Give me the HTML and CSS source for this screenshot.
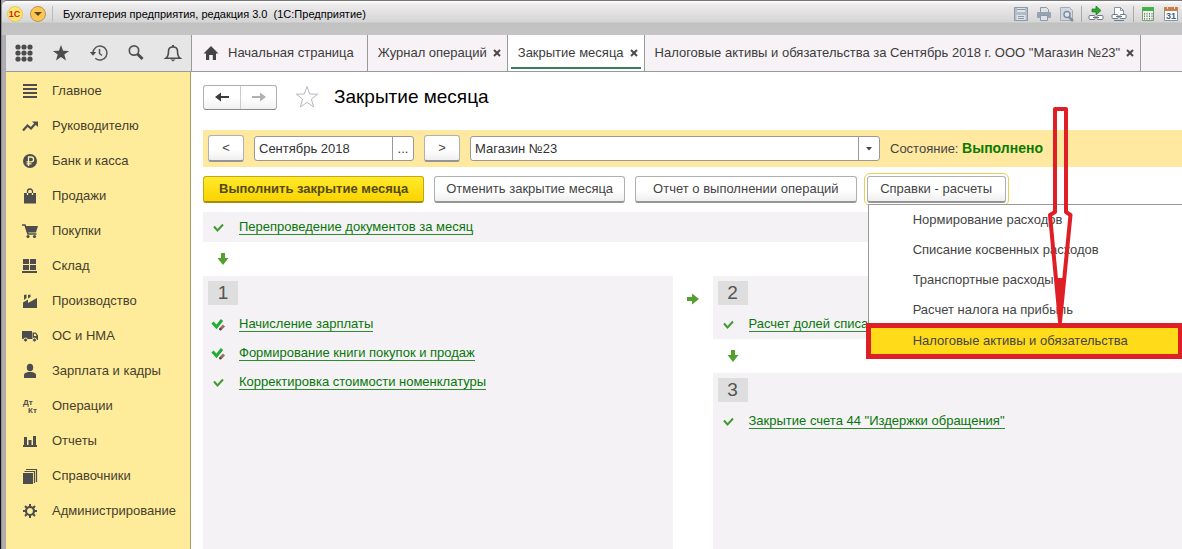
FILE: index.html
```html
<!DOCTYPE html>
<html lang="ru">
<head>
<meta charset="utf-8">
<title>Закрытие месяца</title>
<link rel="stylesheet" href="styles.css">
</head>
<body>
<div class="window">
  <header class="titlebar">
    <svg class="logo" viewBox="0 0 16 16" aria-hidden="true"><circle cx="8" cy="8" r="7.5" fill="#fbe86a" stroke="#e3c95a"/><text x="7.5" y="11" text-anchor="middle" class="logo-text">1С</text></svg>
    <button class="title-menu" aria-label="Главное меню"><svg viewBox="0 0 18 18"><circle cx="9" cy="9" r="7.5" fill="#fcc650" stroke="#b8935a"/><path d="M5 7h8l-4 4z" fill="#5e4526"/></svg></button>
    <span class="title-text">Бухгалтерия предприятия, редакция 3.0 &nbsp;(1С:Предприятие)</span>
    <div class="title-tools">
      <button class="tool" aria-label="Сохранить"><svg viewBox="0 0 16 16"><path d="M1.500 1.500h13v13h-13z" fill="#b4bcc7" stroke="#8c99a8"/><path d="M4 2h8v4H4zM3.500 9h9v5h-9z" fill="#dfe3e8"/><path d="M4 3.500h8M5 10.500h6M5 12.500h6" stroke="#8c99a8"/></svg></button>
      <button class="tool" aria-label="Печать"><svg viewBox="0 0 16 16"><path d="M4.500 6V1.500h6l2 2V6" fill="#dfe3e8" stroke="#8c99a8"/><rect x="1" y="6" width="14" height="6" rx="1" fill="#96a3b2"/><path d="M4.500 9.500h7v5h-7z" fill="#dfe3e8" stroke="#8c99a8"/></svg></button>
      <button class="tool" aria-label="Предварительный просмотр"><svg viewBox="0 0 16 16"><path d="M1.500 1.500h9l3 3v10h-12z" fill="#d3d8de" stroke="#a2acb8"/><circle cx="8" cy="8.500" r="3" fill="#dfe6ee" stroke="#7f8fa2" stroke-width="1.500"/><path d="M10 11l4 4" stroke="#7f8fa2" stroke-width="2.500"/></svg></button>
      <span class="tool-sep"></span>
      <button class="tool" aria-label="Перейти по ссылке"><svg viewBox="0 0 16 16"><path d="M4 3h4V0l5 4.500L8 9V6H4z" fill="#2fa52c" stroke="#187a1c" stroke-width=".7"/><rect x="1" y="9.500" width="6" height="4" rx="1" fill="#fff" stroke="#6c7987"/><rect x="9" y="9.500" width="6" height="4" rx="1" fill="#fff" stroke="#6c7987"/><path d="M5 11.500h6" stroke="#6c7987"/></svg></button>
      <button class="tool" aria-label="Получить ссылку"><svg viewBox="0 0 16 16"><path d="M3.500 10V1.500h6l3 3V10" fill="#fff" stroke="#8a949f"/><path d="M9.500 1.500v3h3" fill="none" stroke="#8a949f"/><rect x="1" y="8.500" width="6" height="4" rx="1" fill="#fff" stroke="#6c7987"/><rect x="9" y="8.500" width="6" height="4" rx="1" fill="#fff" stroke="#6c7987"/><path d="M5 10.500h6M3 14.500h10" stroke="#6c7987"/></svg></button>
      <span class="tool-sep"></span>
      <button class="tool" aria-label="Калькулятор"><svg viewBox="0 0 16 16"><path d="M2.500 1.500h11v13h-11z" fill="#eef3ec" stroke="#7c9b7a"/><path d="M2 1h12v4H2z" fill="#46b04a"/><path d="M4.500 7v7M7 7v7M9.500 7v7M12 7v7" stroke="#5c7b62" stroke-dasharray="1.500 1"/></svg></button>
      <button class="tool" aria-label="Календарь"><svg viewBox="0 0 16 16"><path d="M1.500 1.500h13v13h-13z" fill="#fff" stroke="#8b96a3"/><path d="M1 1h14v4H1z" fill="#c97f4c"/><path d="M4.500 0v3M11.500 0v3" stroke="#f0dcc8"/><text x="8" y="13" text-anchor="middle" class="cal-text">31</text></svg></button>
    </div>
  </header>

  <div class="topbar">
    <div class="quick">
      <button class="qbtn" aria-label="Меню"><svg viewBox="0 0 20 20"><g fill="#4d4d4d"><circle cx="4" cy="4" r="2.600"/><circle cx="10" cy="4" r="2.600"/><circle cx="16" cy="4" r="2.600"/><circle cx="4" cy="10" r="2.600"/><circle cx="10" cy="10" r="2.600"/><circle cx="16" cy="10" r="2.600"/><circle cx="4" cy="16" r="2.600"/><circle cx="10" cy="16" r="2.600"/><circle cx="16" cy="16" r="2.600"/></g></svg></button>
      <button class="qbtn" aria-label="Избранное"><svg viewBox="0 0 20 20"><path d="M10 2l2.100 5.700 6 .2-4.800 3.700 1.700 5.900-5-3.400-5 3.400 1.700-5.900L1.900 7.900l6-.2z" fill="#4d4d4d"/></svg></button>
      <button class="qbtn" aria-label="История"><svg viewBox="0 0 20 20"><g fill="none" stroke="#555" stroke-width="1.500"><path d="M4 10a7 7 0 1 1 2.300 5.200"/><path d="M10.500 6v4.500l2.500 2"/></g><path d="M.8 9h6.400L4 12.800z" fill="#4d4d4d"/></svg></button>
      <button class="qbtn" aria-label="Поиск"><svg viewBox="0 0 20 20"><circle cx="8" cy="7.500" r="4.700" fill="none" stroke="#555" stroke-width="1.700"/><path d="M11.500 11l5 5" stroke="#4d4d4d" stroke-width="3"/></svg></button>
      <button class="qbtn" aria-label="Уведомления"><svg viewBox="0 0 20 20"><path d="M3 15.200c2-1.500 2.500-3 2.500-7C5.500 5.500 7.300 4 10 4s4.500 1.500 4.500 4.200c0 4 .5 5.500 2.500 7z" fill="none" stroke="#4d4d4d" stroke-width="1.600"/><path d="M10 2v2" stroke="#4d4d4d" stroke-width="2"/><path d="M7.500 16.500h5L10 18.500z" fill="#4d4d4d"/></svg></button>
    </div>
    <nav class="tabs" aria-label="Открытые окна">
      <div class="tab"><svg class="home" viewBox="0 0 16 14" aria-hidden="true"><path d="M8 0l7.500 7.500H13V14H9.800V9H6.200v5H3V7.500H.5z" fill="#444"/></svg><a href="#">Начальная страница</a></div>
      <div class="tab"><a href="#">Журнал операций</a><button class="close" aria-label="Закрыть"><svg viewBox="0 0 8 8"><path d="M1 1l6 6M7 1L1 7"/></svg></button></div>
      <div class="tab active"><a href="#">Закрытие месяца</a><button class="close" aria-label="Закрыть"><svg viewBox="0 0 8 8"><path d="M1 1l6 6M7 1L1 7"/></svg></button></div>
      <div class="tab"><a href="#">Налоговые активы и обязательства за Сентябрь 2018 г. ООО "Магазин №23"</a><button class="close" aria-label="Закрыть"><svg viewBox="0 0 8 8"><path d="M1 1l6 6M7 1L1 7"/></svg></button></div>
    </nav>
  </div>

  <div class="body">
    <nav class="sidebar" aria-label="Разделы">
      <a href="#"><svg viewBox="0 0 16 16"><path d="M1 2h14M1 6h14M1 10h14M1 14h14" stroke="#4d4d4d" stroke-width="2"/></svg>Главное</a>
      <a href="#"><svg viewBox="0 0 16 16"><path d="M1 12.500L5.500 7.500l3.500 3 4.500-5" fill="none" stroke="#4d4d4d" stroke-width="2.200"/><path d="M10 3.500h6v5.500z" fill="#4d4d4d"/></svg>Руководителю</a>
      <a href="#"><svg viewBox="0 0 16 16"><circle cx="8" cy="8" r="7" fill="#4d4d4d"/><path d="M6.500 13V4h2.700a2.300 2.300 0 0 1 0 4.800H4.500M4.500 10.800h5" fill="none" stroke="#fff2a8" stroke-width="1.300"/></svg>Банк и касса</a>
      <a href="#"><svg viewBox="0 0 16 16"><path d="M2 5h12v10.500H2z" fill="#4d4d4d"/><path d="M5.500 7V3.500a2.500 2.500 0 0 1 5 0V7" fill="none" stroke="#4d4d4d" stroke-width="1.300"/><path d="M5.500 5v2M10.500 5v2" stroke="#fff2a8" stroke-width="1.300"/></svg>Продажи</a>
      <a href="#"><svg viewBox="0 0 16 16"><path d="M0 2h3l3 9h8.500" fill="none" stroke="#4d4d4d" stroke-width="1.500"/><path d="M3 3h13l-2 6.500H5z" fill="#4d4d4d"/><circle cx="6" cy="13.500" r="1.600" fill="#4d4d4d"/><circle cx="12.500" cy="13.500" r="1.600" fill="#4d4d4d"/></svg>Покупки</a>
      <a href="#"><svg viewBox="0 0 16 16"><path d="M1 1h6v5H1zM8 1h6v5H8zM1 7h6v5H1zM8 7h6v5H8zM0 13h15v2H0z" fill="#4d4d4d"/></svg>Склад</a>
      <a href="#"><svg viewBox="0 0 16 16"><path d="M1 15V9.500L6 6.500V10l9-5v10z" fill="#4d4d4d"/><path d="M2 2l2.500-.5V5L2 7zM6 2l2.500-.5V4L6 5.500z" fill="#4d4d4d"/></svg>Производство</a>
      <a href="#"><svg viewBox="0 0 16 16"><path d="M0 3h10v8H0zM10.500 4.500H14l2 3V12h-5.500z" fill="#4d4d4d"/><path d="M12 5.800h1.500L14.500 8H12z" fill="#ffec9a"/><circle cx="3.500" cy="12" r="2" fill="#4d4d4d" stroke="#ffec9a"/><circle cx="12.500" cy="12" r="2" fill="#4d4d4d" stroke="#ffec9a"/></svg>ОС и НМА</a>
      <a href="#"><svg viewBox="0 0 16 16"><ellipse cx="8" cy="4.500" rx="3.200" ry="3.800" fill="#4d4d4d"/><path d="M2 15v-3c0-2 2-2.500 4-3h4c2 .5 4 1 4 3v3z" fill="#4d4d4d"/></svg>Зарплата и кадры</a>
      <a href="#"><svg viewBox="0 0 16 16" class="dtkt" aria-hidden="true"><text x="1" y="7">Дт</text><text x="6" y="15">Кт</text></svg>Операции</a>
      <a href="#"><svg viewBox="0 0 16 16"><path d="M1 12h14v2H1zM2 4h3v8H2zM6.500 7h3v5h-3zM11 3h3v9h-3z" fill="#4d4d4d"/></svg>Отчеты</a>
      <a href="#"><svg viewBox="0 0 16 16"><path d="M1 5h10v11H1z" fill="#4d4d4d"/><path d="M2.500 3.500h10V15M4 1.500h10.500V14" fill="none" stroke="#4d4d4d" stroke-width="1.200"/></svg>Справочники</a>
      <a href="#"><svg viewBox="0 0 16 16"><circle cx="8" cy="8" r="4" fill="none" stroke="#4d4d4d" stroke-width="2.200"/><path d="M8 1v3M8 12v3M1 8h3M12 8h3M3 3l2.200 2.200M10.800 10.800L13 13M13 3l-2.200 2.200M5.200 10.800L3 13" stroke="#4d4d4d" stroke-width="2"/></svg>Администрирование</a>
    </nav>

    <main class="main">
      <div class="heading">
        <div class="history">
          <button aria-label="Назад"><svg viewBox="0 0 14 10"><path d="M0 5l6-4.500v3.500h8v2H6v3.500z" fill="#3c3c3c"/></svg></button>
          <button aria-label="Вперед"><svg viewBox="0 0 14 10"><path d="M14 5L8 .5V4H0v2h8v3.500z" fill="#b0b0b0"/></svg></button>
        </div>
        <button class="star" aria-label="Добавить в избранное"><svg viewBox="0 0 24 24"><path d="M12 1.500l2.700 7.500 8 .2-6.300 4.900 2.200 7.900-6.600-4.600L5.400 22l2.200-7.900L1.300 9.200l8-.2z" fill="#fff" stroke="#b4bac0"/></svg></button>
        <h1>Закрытие месяца</h1>
      </div>

      <div class="band">
        <button class="btn step" aria-label="Предыдущий месяц">&lt;</button>
        <div class="field"><input type="text" value="Сентябрь 2018" aria-label="Период"><button aria-label="Выбрать период">...</button></div>
        <button class="btn step" aria-label="Следующий месяц">&gt;</button>
        <div class="combo"><select aria-label="Организация"><option>Магазин №23</option></select><svg viewBox="0 0 6 4" aria-hidden="true"><path d="M0 0h6L3 3.500z" fill="#444"/></svg></div>
        <span class="state">Состояние: <b>Выполнено</b></span>
      </div>

      <div class="commands">
        <button class="btn primary">Выполнить закрытие месяца</button>
        <button class="btn">Отменить закрытие месяца</button>
        <button class="btn wide">Отчет о выполнении операций</button>
        <div class="dropdown">
          <button class="btn focused" aria-haspopup="menu" aria-expanded="true">Справки - расчеты</button>
          <div class="menu" role="menu">
            <button role="menuitem">Нормирование расходов</button>
            <button role="menuitem">Списание косвенных расходов</button>
            <button role="menuitem">Транспортные расходы</button>
            <button role="menuitem">Расчет налога на прибыль</button>
            <button role="menuitem" class="marked">Налоговые активы и обязательства</button>
            <svg class="pointer" viewBox="0 0 26 222" aria-hidden="true"><path d="M8 3H19V106L23.500 109L13 216L3 109L8 106Z" fill="none" stroke="#df1f26" stroke-width="4" stroke-linejoin="round"/><path d="M8.500 172H17.500L13 218Z" fill="#df1f26"/></svg>
          </div>
        </div>
      </div>

      <div class="strip op"><svg class="check" viewBox="0 0 16 14"><path d="M3 6.500l3.500 4L12 4.500"/></svg><a href="#">Перепроведение документов за месяц</a></div>
      <svg class="arrow" viewBox="0 0 12 12"><path d="M4 0h4v5h3.500L6 12 .5 5H4z"/></svg>

      <div class="stages">
        <section class="panel">
          <h2>1</h2>
          <div class="op"><svg class="check edited" viewBox="0 0 16 14"><path d="M1.500 5.500l4 4.500L11 3"/><path class="pen" d="M9 12.500l4-4"/><path class="tip" d="M8.500 13l1.500-1.500"/></svg><a href="#">Начисление зарплаты</a></div>
          <div class="op"><svg class="check edited" viewBox="0 0 16 14"><path d="M1.500 5.500l4 4.500L11 3"/><path class="pen" d="M9 12.500l4-4"/><path class="tip" d="M8.500 13l1.500-1.500"/></svg><a href="#">Формирование книги покупок и продаж</a></div>
          <div class="op"><svg class="check" viewBox="0 0 16 14"><path d="M3 6.500l3.500 4L12 4.500"/></svg><a href="#">Корректировка стоимости номенклатуры</a></div>
        </section>
        <svg class="arrow side" viewBox="0 0 12 12"><path d="M0 4h5V.5L12 6l-7 5.500V8H0z"/></svg>
        <div class="column">
          <section class="panel short">
            <h2>2</h2>
            <div class="op"><svg class="check" viewBox="0 0 16 14"><path d="M3 6.500l3.500 4L12 4.500"/></svg><a href="#">Расчет долей списания</a></div>
          </section>
          <svg class="arrow" viewBox="0 0 12 12"><path d="M4 0h4v5h3.500L6 12 .5 5H4z"/></svg>
          <section class="panel grow">
            <h2>3</h2>
            <div class="op"><svg class="check" viewBox="0 0 16 14"><path d="M3 6.500l3.500 4L12 4.500"/></svg><a href="#">Закрытие счета 44 "Издержки обращения"</a></div>
          </section>
        </div>
      </div>
    </main>
  </div>
</div>
</body>
</html>
```

FILE: styles.css
```css
* { box-sizing: border-box; }
html, body { height: 100%; margin: 0; }
body { font: 13px/16px "Liberation Sans", Arial, sans-serif; color: #444; overflow: hidden; background: #fff; }
button, input, select { font: inherit; color: inherit; margin: 0; padding: 0; border: 0; background: none; border-radius: 0; }
a { color: inherit; text-decoration: none; white-space: nowrap; }
svg { display: block; flex: none; }
h1, h2 { margin: 0; font-weight: normal; }

.window { display: flex; flex-direction: column; min-height: 100%; padding-left: 6px; background: linear-gradient(90deg, #111 1px, #8a878b 1px, #b5b2b8 3px, #aaa6ab 6px, #fff 6px); }

.titlebar { display: flex; align-items: center; height: 35px; margin-left: -4px; padding: 0 3px 9px 4px; border-top: 1px solid #777; border-top-left-radius: 5px; background: linear-gradient(#fff 0, #eceaeb 4px, #d6d5d6 21px, #c2c1c2 22px, #c6c5c6 100%); }
.logo { width: 16px; height: 16px; margin-left: 1px; }
.logo-text { font: bold 9px "Liberation Sans", sans-serif; fill: #d3201f; }
.title-menu { width: 18px; height: 18px; margin-left: 6px; }
.title-text { margin-left: 5px; padding-left: 10px; font-size: 11px; color: #000; white-space: pre; border-left: 1px solid #bbb; }
.title-tools { display: flex; align-items: center; gap: 7px; margin-left: auto; }
.tool { width: 16px; height: 16px; }
.tool-sep { width: 1px; height: 16px; margin: 0 -1px; background: #aaa; }
.cal-text { font: bold 9px "Liberation Sans", sans-serif; fill: #44607c; }

.topbar { display: flex; height: 37px; border-bottom: 1px solid #999; background: #f6f2f5; }
.quick { display: flex; align-items: center; justify-content: space-between; flex: none; width: 186px; padding: 0 8px; background: #e6e6e6; border-right: 1px solid #999; }
.qbtn { width: 20px; height: 20px; }
.tabs { display: flex; min-width: 0; }
.tab { display: flex; align-items: center; gap: 6px; padding: 0 6px 0 10px; border-right: 1px solid #999; color: #3c3c3c; }
.tab:first-child { padding: 0 13px 0 11px; gap: 9px; }
.home { width: 16px; height: 14px; }
.tab.active { background: linear-gradient(#3a7d5c, #3a7d5c) 50% 32px / calc(100% - 6px) 2px no-repeat #fff; }
.close { width: 8px; height: 8px; }
.close path { stroke: #4a4a4a; stroke-width: 2; }

.body { display: flex; flex: 1; }
.sidebar { flex: none; width: 185px; padding-top: 1px; background: #ffec9a; border-right: 1px solid #a79c67; }
.sidebar a { display: flex; align-items: center; gap: 14px; height: 35px; padding-left: 16px; color: #45402f; }
.sidebar svg { width: 16px; height: 16px; }
.dtkt text { font: bold 8px "Liberation Sans", sans-serif; fill: #4d4d4d; }

.main { display: flex; flex-direction: column; flex: 1; min-width: 0; padding: 12px 0 0 12px; }
.heading { display: flex; align-items: center; height: 26px; }
.history { display: flex; height: 25px; border: 1px solid #b0b0b0; border-bottom-color: #888; border-radius: 3px; background: linear-gradient(#fff 50%, #f0f0f0); }
.history button { display: grid; place-items: center; width: 36px; }
.history button + button { border-left: 1px solid #ccc; }
.history svg { width: 14px; height: 10px; }
.star { width: 24px; height: 24px; margin-left: 18px; }
h1 { margin-left: 15px; font-size: 19px; line-height: 24px; color: #000; white-space: nowrap; }

.btn { height: 27px; padding: 0 11px; border: 1px solid #b0b0b0; border-bottom: 2px solid #959595; border-radius: 3px; background: linear-gradient(#fff 55%, #efefef); white-space: nowrap; }
.band { display: flex; align-items: center; gap: 10px; height: 37px; margin-top: 20px; padding: 0 5px; background: #ffe9a0; }
.step { flex: none; width: 36px; padding: 0; }
.field, .combo { height: 25px; border: 1px solid #999; border-radius: 3px; background: #fff; color: #333; }
.field { display: flex; flex: none; width: 160px; }
.field input { flex: 1; min-width: 0; padding-left: 4px; }
.field button { width: 21px; border-left: 1px solid #999; }
.combo { display: grid; grid-template-columns: 1fr 20px; flex: 0 1 410px; }
.combo select { grid-area: 1 / 1 / 2 / 3; appearance: none; padding-left: 4px; background: linear-gradient(#999, #999) calc(100% - 20px) 0 / 1px 100% no-repeat; }
.combo svg { grid-area: 1 / 2; place-self: center; width: 6px; height: 4px; pointer-events: none; }
.state { white-space: nowrap; }
.state b { font-size: 14px; color: #0c7a00; }

.commands { display: flex; gap: 10px; margin-top: 9px; }
.commands .btn { min-width: 139px; }
.commands .wide { padding: 0 17px; }
.commands .primary { padding: 0 15px; font-weight: bold; color: #544a13; border-color: #c2a614; border-bottom-color: #a48c14; background: linear-gradient(#ffea2c, #fad400); }
.dropdown { position: relative; }
.commands .focused { outline: 1px solid #e6cf53; outline-offset: 2px; }
.menu { position: absolute; top: 28px; left: 1px; z-index: 2; width: 316px; padding-bottom: 2px; border: 1px solid #999; background: #fff; }
.menu button { display: block; width: 100%; height: 30px; padding-left: 44px; text-align: left; white-space: nowrap; }
.menu .marked { width: calc(100% - 3px); margin-top: 1px; background: #ffdb1a; outline: 5px solid #df1f26; outline-offset: -2px; }
.pointer { position: absolute; top: -99px; left: 178px; width: 26px; height: 222px; }

.op { display: flex; align-items: center; gap: 12px; height: 29px; padding-left: 8px; color: #08760b; }
.op a { border-bottom: 1px solid #2d8a2f; line-height: 15px; }
.strip { height: 30px; margin-top: 9px; background: #f5f2f5; }
.check { width: 16px; height: 14px; }
.check path { fill: none; stroke: #429b31; stroke-width: 2; }
.check.edited path { stroke: #21ad35; stroke-width: 3; }
.check.edited .pen { stroke: #9a6d62; stroke-width: 3; }
.check.edited .tip { stroke: #454545; stroke-width: 2; }
.arrow { width: 12px; height: 12px; margin: 11px 0 11px 14px; fill: #54a02f; }
.stages { display: grid; grid-template-columns: 1fr 40px 1fr; flex: 1; }
.side { margin: 17px 0 0 14px; }
.panel { padding: 5px 0 0; background: #f5f2f5; }
.panel h2 { width: 30px; height: 24px; margin: 0 0 4px 5px; background: #dedede; font-size: 19px; line-height: 24px; text-align: center; color: #555; }
.short { height: 63px; overflow: hidden; }
.column { display: flex; flex-direction: column; min-width: 0; }
.grow { flex: 1; }
```
